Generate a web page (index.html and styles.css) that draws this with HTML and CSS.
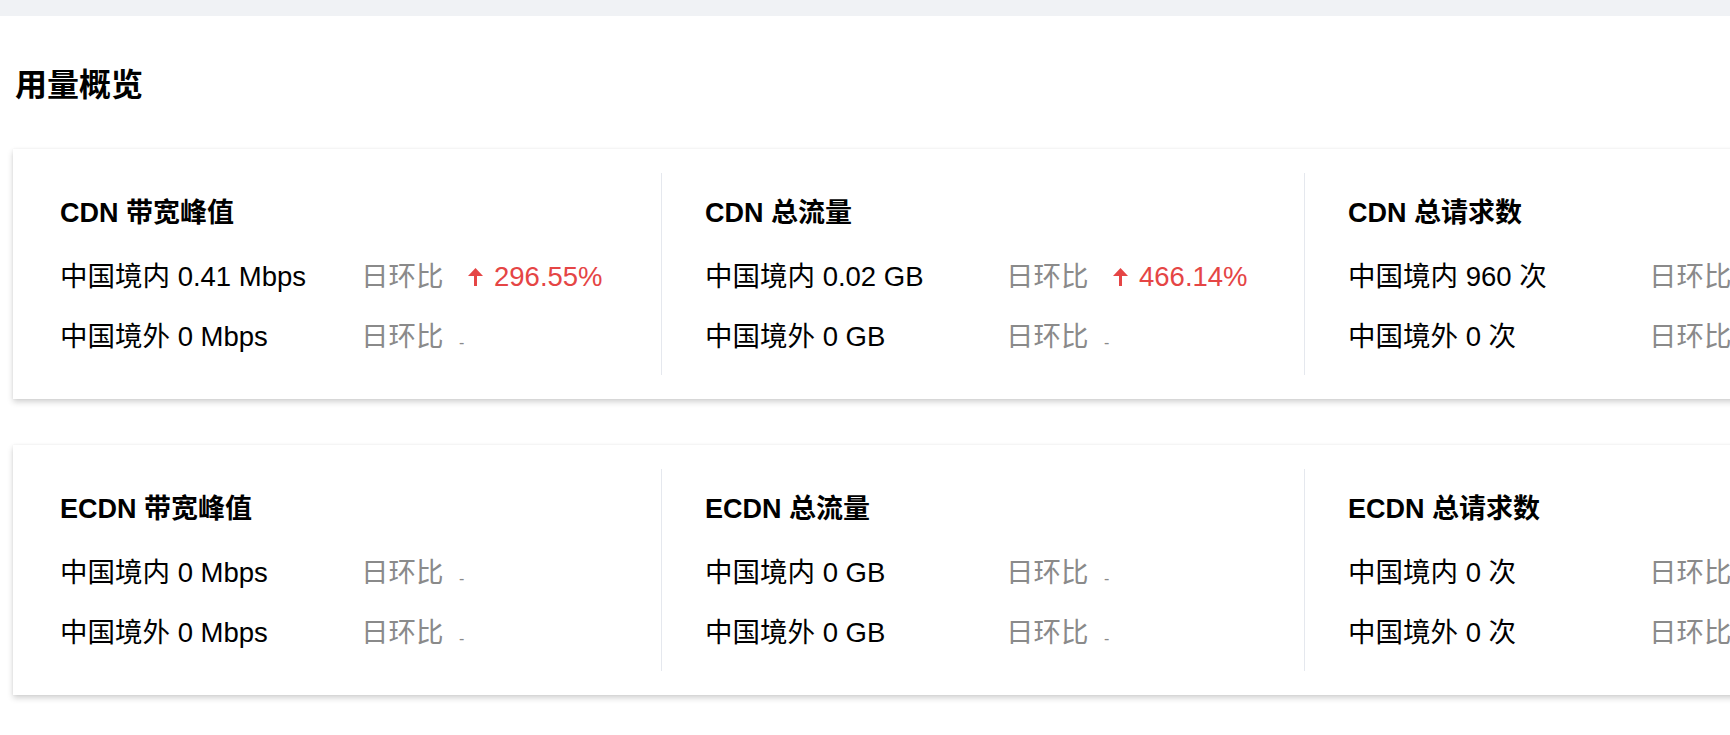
FILE: index.html
```html
<!DOCTYPE html>
<html lang="zh-CN">
<head>
  <meta charset="UTF-8">
  <meta name="viewport" content="width=device-width, initial-scale=1.0">
  <title>用量概览</title>
  <link rel="stylesheet" href="styles.css">
</head>
<body>

  <div class="top-bar"></div>

  <main class="overview">
    <h2 class="overview-title">用量概览</h2>

    <div class="usage-card">
      <div class="usage-col">
        <h3>CDN 带宽峰值</h3>
        <div class="usage-row">
          <span class="usage-label">中国境内 0.41 Mbps</span>
          <span class="ratio-label">日环比</span>
          <span class="ratio-up">
            <svg class="arrow-up" width="15" height="18" viewBox="0 0 15 18"><path d="M7.5 0 L15 8 L9 8 L9 18 L6 18 L6 8 L0 8 Z" fill="#e54545"/></svg>
            296.55%
          </span>
        </div>
        <div class="usage-row">
          <span class="usage-label">中国境外 0 Mbps</span>
          <span class="ratio-label">日环比</span>
          <span class="ratio-none">-</span>
        </div>
      </div>
      <div class="usage-col">
        <h3>CDN 总流量</h3>
        <div class="usage-row">
          <span class="usage-label">中国境内 0.02 GB</span>
          <span class="ratio-label">日环比</span>
          <span class="ratio-up">
            <svg class="arrow-up" width="15" height="18" viewBox="0 0 15 18"><path d="M7.5 0 L15 8 L9 8 L9 18 L6 18 L6 8 L0 8 Z" fill="#e54545"/></svg>
            466.14%
          </span>
        </div>
        <div class="usage-row">
          <span class="usage-label">中国境外 0 GB</span>
          <span class="ratio-label">日环比</span>
          <span class="ratio-none">-</span>
        </div>
      </div>
      <div class="usage-col">
        <h3>CDN 总请求数</h3>
        <div class="usage-row">
          <span class="usage-label">中国境内 960 次</span>
          <span class="ratio-label">日环比</span>
          <span class="ratio-none">-</span>
        </div>
        <div class="usage-row">
          <span class="usage-label">中国境外 0 次</span>
          <span class="ratio-label">日环比</span>
          <span class="ratio-none">-</span>
        </div>
      </div>
    </div>

    <div class="usage-card">
      <div class="usage-col">
        <h3>ECDN 带宽峰值</h3>
        <div class="usage-row">
          <span class="usage-label">中国境内 0 Mbps</span>
          <span class="ratio-label">日环比</span>
          <span class="ratio-none">-</span>
        </div>
        <div class="usage-row">
          <span class="usage-label">中国境外 0 Mbps</span>
          <span class="ratio-label">日环比</span>
          <span class="ratio-none">-</span>
        </div>
      </div>
      <div class="usage-col">
        <h3>ECDN 总流量</h3>
        <div class="usage-row">
          <span class="usage-label">中国境内 0 GB</span>
          <span class="ratio-label">日环比</span>
          <span class="ratio-none">-</span>
        </div>
        <div class="usage-row">
          <span class="usage-label">中国境外 0 GB</span>
          <span class="ratio-label">日环比</span>
          <span class="ratio-none">-</span>
        </div>
      </div>
      <div class="usage-col">
        <h3>ECDN 总请求数</h3>
        <div class="usage-row">
          <span class="usage-label">中国境内 0 次</span>
          <span class="ratio-label">日环比</span>
          <span class="ratio-none">-</span>
        </div>
        <div class="usage-row">
          <span class="usage-label">中国境外 0 次</span>
          <span class="ratio-label">日环比</span>
          <span class="ratio-none">-</span>
        </div>
      </div>
    </div>
  </main>

</body>
</html>
```

FILE: styles.css
```css
* {
  margin: 0;
  padding: 0;
  box-sizing: border-box;
}

html,
body {
  overflow: hidden;
}

body {
  font-family: "Liberation Sans", "Noto Sans CJK SC", sans-serif;
  background-color: #fff;
  color: #000;
}

.top-bar {
  height: 16px;
  background-color: #f0f2f5;
}

.overview {
  padding: 49px 0 0 13px;
}

.overview-title {
  font-size: 32px;
  line-height: 40px;
  font-weight: bold;
  margin: 0 0 44px 2px;
}

.usage-card {
  display: flex;
  width: 2000px;
  padding: 24px 0 24px 5px;
  margin-bottom: 46px;
  background-color: #fff;
  box-shadow: 0 3px 6px rgba(0, 0, 0, 0.18), 0 0 2px rgba(0, 0, 0, 0.06);
}

.usage-col {
  flex: 0 0 643px;
  padding: 24px 0 22px 43px;
  border-left: 1px solid #e5e8ee;
}

.usage-col:first-child {
  border-left-color: transparent;
  padding-left: 41px;
}

.usage-col h3 {
  font-size: 27px;
  line-height: 32px;
  font-weight: bold;
  margin-bottom: 32px;
}

.usage-row {
  display: flex;
  align-items: center;
  font-size: 27.5px;
  line-height: 32px;
}

.usage-row + .usage-row {
  margin-top: 28px;
}

.usage-label {
  width: 301px;
  flex-shrink: 0;
  white-space: nowrap;
}

.ratio-label {
  color: #8a8a8a;
  width: 100px;
  flex-shrink: 0;
}

.ratio-up {
  display: flex;
  align-items: center;
  gap: 11px;
  margin-left: 7px;
  color: #e54545;
}

.ratio-none {
  color: #8a8a8a;
  font-size: 16px;
  align-self: flex-end;
  line-height: 20px;
  margin-left: -2px;
}
```
